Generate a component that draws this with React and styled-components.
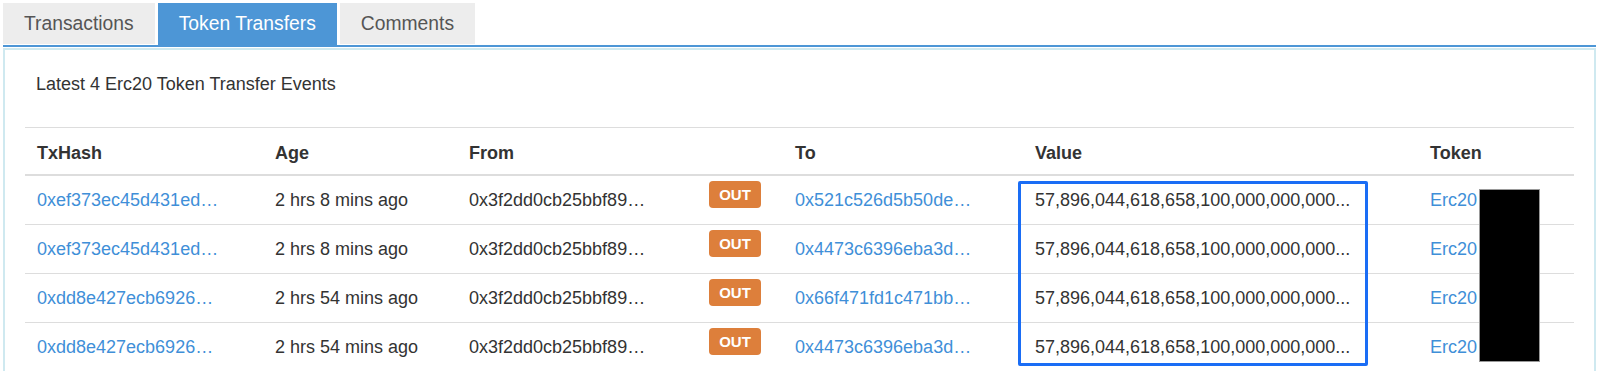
import React from 'react'
import styled, { createGlobalStyle } from 'styled-components'

const GlobalStyle = createGlobalStyle`
  body {
    margin: 0;
    background: #fff;
    font-family: "Liberation Sans", Arial, Helvetica, sans-serif;
    color: #333;
  }
`

const transfers = [
  { hash: '0xef373ec45d431ed…', age: '2 hrs 8 mins ago', from: '0x3f2dd0cb25bbf89…', to: '0x521c526d5b50de…' },
  { hash: '0xef373ec45d431ed…', age: '2 hrs 8 mins ago', from: '0x3f2dd0cb25bbf89…', to: '0x4473c6396eba3d…' },
  { hash: '0xdd8e427ecb6926…', age: '2 hrs 54 mins ago', from: '0x3f2dd0cb25bbf89…', to: '0x66f471fd1c471bb…' },
  { hash: '0xdd8e427ecb6926…', age: '2 hrs 54 mins ago', from: '0x3f2dd0cb25bbf89…', to: '0x4473c6396eba3d…' },
]

const VALUE = '57,896,044,618,658,100,000,000,000...'

const App = () => {
  return (
    <Page>
      <GlobalStyle />
      <TabBar>
        <Tab>Transactions</Tab>
        <Tab active>Token Transfers</Tab>
        <Tab>Comments</Tab>
      </TabBar>
      <Panel>
        <Title>Latest 4 Erc20 Token Transfer Events</Title>
        <TableWrap>
          <Table>
            <colgroup>
              <col style={{ width: 238 }} />
              <col style={{ width: 194 }} />
              <col style={{ width: 240 }} />
              <col style={{ width: 86 }} />
              <col style={{ width: 240 }} />
              <col style={{ width: 395 }} />
              <col style={{ width: 156 }} />
            </colgroup>
            <thead>
              <tr>
                <Th>TxHash</Th>
                <Th>Age</Th>
                <Th>From</Th>
                <Th></Th>
                <Th>To</Th>
                <Th>Value</Th>
                <Th>Token</Th>
              </tr>
            </thead>
            <tbody>
              {transfers.map((t, i) => (
                <Row key={i}>
                  <Td><Link>{t.hash}</Link></Td>
                  <Td>{t.age}</Td>
                  <Td>{t.from}</Td>
                  <Td><Badge>OUT</Badge></Td>
                  <Td><Link>{t.to}</Link></Td>
                  <Td>{VALUE}</Td>
                  <Td><Link>Erc20</Link></Td>
                </Row>
              ))}
            </tbody>
          </Table>
          <Highlight />
          <Redaction />
        </TableWrap>
      </Panel>
    </Page>
  )
}

const Page = styled.div`
  padding: 3px 4px 0 3px;
`

const TabBar = styled.div`
  display: flex;
  gap: 3px;
  border-bottom: 2px solid #4d96d6;
`

const Tab = styled.div`
  height: ${p => (p.active ? '42px' : '41px')};
  line-height: 41px;
  padding: 0 21px;
  font-size: 19.3px;
  background: ${p => (p.active ? '#4d96d6' : '#ededed')};
  color: ${p => (p.active ? '#fff' : '#555')};
  margin-bottom: ${p => (p.active ? '0' : '1px')};
`

const Panel = styled.div`
  margin-top: 1px;
  border: 2px solid #cfe9f0;
  border-bottom: none;
  padding: 21px 20px 0 20px;
`

const Title = styled.div`
  font-size: 18px;
  line-height: 26px;
  padding-left: 11px;
  margin-bottom: 30px;
`

const TableWrap = styled.div`
  position: relative;
`

const Table = styled.table`
  width: 100%;
  table-layout: fixed;
  border-collapse: collapse;
  border-top: 1px solid #ddd;
  font-size: 18px;
`

const Th = styled.th`
  text-align: left;
  font-weight: bold;
  line-height: 26px;
  padding: 12px 12px 8px 12px;
  border-bottom: 2px solid #ddd;
  white-space: nowrap;
`

const Row = styled.tr`
  & + & td {
    border-top: 1px solid #ddd;
  }
`

const Td = styled.td`
  line-height: 26px;
  padding: 11px 12px;
  white-space: nowrap;
  overflow: hidden;
  vertical-align: top;
`

const Link = styled.span`
  color: #3f8fd8;
`

const Badge = styled.span`
  display: inline-block;
  vertical-align: top;
  margin-top: -6px;
  width: 52px;
  height: 27px;
  line-height: 27px;
  text-align: center;
  border-radius: 4px;
  background: #dd7f3b;
  color: #fff;
  font-size: 15px;
  font-weight: bold;
`

const Highlight = styled.div`
  position: absolute;
  left: 993px;
  top: 54px;
  width: 350px;
  height: 185px;
  box-sizing: border-box;
  border: 3px solid #1a6df5;
  border-radius: 2px;
  pointer-events: none;
`

const Redaction = styled.div`
  position: absolute;
  left: 1454px;
  top: 62px;
  width: 61px;
  height: 173px;
  box-sizing: border-box;
  background: #000;
  border: 1px solid #999;
`

export default App
